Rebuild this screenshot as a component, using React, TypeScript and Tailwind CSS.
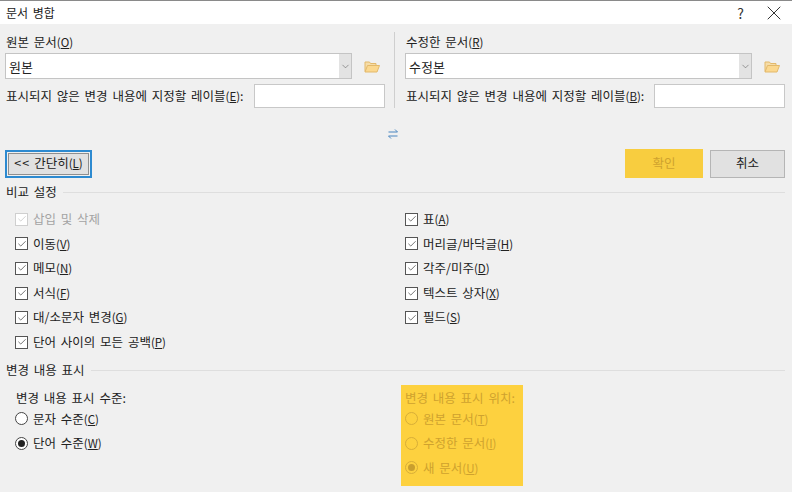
import React from 'react';
import { Check, ChevronDown, X } from 'lucide-react';

const Hot: React.FC<{ k: string }> = ({ k }) => (
  <span className="text-[11.5px]">
    (<span className="underline">{k}</span>)
  </span>
);

const Folder = () => (
  <svg width="16" height="13" viewBox="0 0 16 13">
    <path d="M1 11.5V2h4.5l1 1.5H12v2" fill="#f5dca8" stroke="#e3b96b" />
    <path d="M1 12l2.5-6.5H15.5L13 12z" fill="#fbd88f" stroke="#e3b96b" />
  </svg>
);

const SwapIcon = () => (
  <svg width="10" height="10" viewBox="0 0 10 10" fill="none" stroke="#4a86c0" strokeWidth="1">
    <path d="M0.5 3H9.5M7 0.5L9.5 3" />
    <path d="M9.5 7H0.5M3 9.5L0.5 7" />
  </svg>
);

const CheckRow: React.FC<{ label: string; k?: string; disabled?: boolean }> = ({ label, k, disabled }) => (
  <div className={`flex h-[24.6px] items-center gap-[5px] ${disabled ? 'text-[#a3a3a3]' : ''}`}>
    <span
      className={`flex h-[13px] w-[13px] items-center justify-center border bg-white ${
        disabled ? 'border-[#cfcfcf]' : 'border-[#555555]'
      }`}
    >
      <Check size={10} strokeWidth={1.6} color={disabled ? '#bdbdbd' : '#333333'} />
    </span>
    <span>
      {label}
      {k && <Hot k={k} />}
    </span>
  </div>
);

const RadioRow: React.FC<{ label: string; k: string; on?: boolean; muted?: boolean }> = ({ label, k, on, muted }) => (
  <div className="flex h-[24.5px] items-center gap-[5px]">
    <span
      className={`flex h-[13px] w-[13px] items-center justify-center rounded-full border ${
        muted ? 'border-[#d8ae38]' : 'border-[#444444] bg-white'
      }`}
    >
      {on && <span className={`h-[7px] w-[7px] rounded-full ${muted ? 'bg-[#c99f2e]' : 'bg-[#222222]'}`} />}
    </span>
    <span>
      {label}
      <Hot k={k} />
    </span>
  </div>
);

const SourcePanel: React.FC<{ title: string; k: string; value: string; labelKey: string }> = ({
  title,
  k,
  value,
  labelKey,
}) => (
  <div className="w-[380px]">
    <div className="flex h-[21px] items-start pl-px pt-[4px]">
      <span>
        {title}
        <Hot k={k} />
      </span>
    </div>
    <div className="flex items-center">
      <div className="flex h-[26px] w-[347px] items-center justify-between border border-[#c4c4c4] bg-white pl-[3px] text-[13px]">
        {value}
        <span className="flex h-full w-[12px] items-center justify-center bg-[#e3e3e3] text-[#555555]">
          <ChevronDown size={11} strokeWidth={1.2} />
        </span>
      </div>
      <span className="ml-[12px]">
        <Folder />
      </span>
    </div>
    <div className="mt-[5px] flex h-[24px] items-center justify-between pl-px">
      <span>
        표시되지 않은 변경 내용에 지정할 레이블
        <Hot k={labelKey} />:
      </span>
      <div className="h-full w-[131px] border border-[#c8c8c8] bg-white" />
    </div>
  </div>
);

const SectionTitle: React.FC<{ title: string }> = ({ title }) => (
  <div className="flex h-[18px] items-center gap-[6px] pl-px">
    <span>{title}</span>
    <div className="h-px flex-1 bg-[#dedede]" />
  </div>
);

export default function App() {
  return (
    <div
      className="flex h-[492px] w-[792px] flex-col overflow-hidden border-t border-[#8a8a8a] bg-[#f0f0f0] text-[12.5px] leading-none text-[#222222] [word-spacing:2px]"
      style={{ fontFamily: '"Noto Sans CJK KR", "Noto Sans", sans-serif' }}
    >
      <div className="flex h-[23px] shrink-0 items-center justify-between bg-white pl-[6px] pr-[6px] text-[12px]">
        <span>문서 병합</span>
        <div className="flex items-center gap-[18px] text-[#333333]">
          <span className="text-[14px]">?</span>
          <X size={24} strokeWidth={1} />
        </div>
      </div>

      <div className="flex flex-1 flex-col pl-[5px] pr-[7px]">
        <div className="mt-[8px] flex">
          <SourcePanel title="원본 문서" k="O" value="원본" labelKey="E" />
          <div className="ml-[9px] mr-[10px] w-px bg-[#cfcfcf]" />
          <SourcePanel title="수정한 문서" k="R" value="수정본" labelKey="B" />
        </div>

        <div className="mt-[20px] flex h-[12px] items-center justify-center pr-[5px]">
          <SwapIcon />
        </div>

        <div className="mt-[9px] flex items-center justify-between">
          <div className="border-2 border-[#2d8ad0] p-px">
            <button className="flex h-[22px] w-[81px] items-center justify-center gap-[4px] border border-[#8f8f8f] bg-[#e1e1e1]">
              <span className="tracking-[1px]">&lt;&lt;</span>
              <span>
                간단히
                <Hot k="L" />
              </span>
            </button>
          </div>
          <div className="flex items-center gap-[7px]">
            <button className="h-[29px] w-[78px] bg-[#f8cd3f] text-[#cfa22e]">확인</button>
            <button className="h-[28px] w-[75px] border border-[#b5b5b5] bg-[#e1e1e1]">취소</button>
          </div>
        </div>

        <div className="mt-[5px]">
          <SectionTitle title="비교 설정" />
        </div>
        <div className="mt-[6px] grid grid-cols-[390px_1fr] pl-[10px]">
          <div>
            <CheckRow label="삽입 및 삭제" disabled />
            <CheckRow label="이동" k="V" />
            <CheckRow label="메모" k="N" />
            <CheckRow label="서식" k="F" />
            <CheckRow label="대/소문자 변경" k="G" />
            <CheckRow label="단어 사이의 모든 공백" k="P" />
          </div>
          <div>
            <CheckRow label="표" k="A" />
            <CheckRow label="머리글/바닥글" k="H" />
            <CheckRow label="각주/미주" k="D" />
            <CheckRow label="텍스트 상자" k="X" />
            <CheckRow label="필드" k="S" />
          </div>
        </div>

        <div className="mt-[7px]">
          <SectionTitle title="변경 내용 표시" />
        </div>
        <div className="grid grid-cols-[390px_1fr] pl-[10px]">
          <div className="pt-[12px]">
            <div className="mb-px h-[14px] pl-px">변경 내용 표시 수준:</div>
            <RadioRow label="문자 수준" k="C" />
            <RadioRow label="단어 수준" k="W" on />
          </div>
          <div className="-ml-[4px] pt-[5px]">
            <div className="h-[101px] w-[122px] bg-[#fdd13f] pl-[4px] pt-[7px] text-[#cfa22e]">
              <div className="mb-px h-[14px]">변경 내용 표시 위치:</div>
              <RadioRow label="원본 문서" k="T" muted />
              <RadioRow label="수정한 문서" k="I" muted />
              <RadioRow label="새 문서" k="U" on muted />
            </div>
          </div>
        </div>
      </div>
    </div>
  );
}
